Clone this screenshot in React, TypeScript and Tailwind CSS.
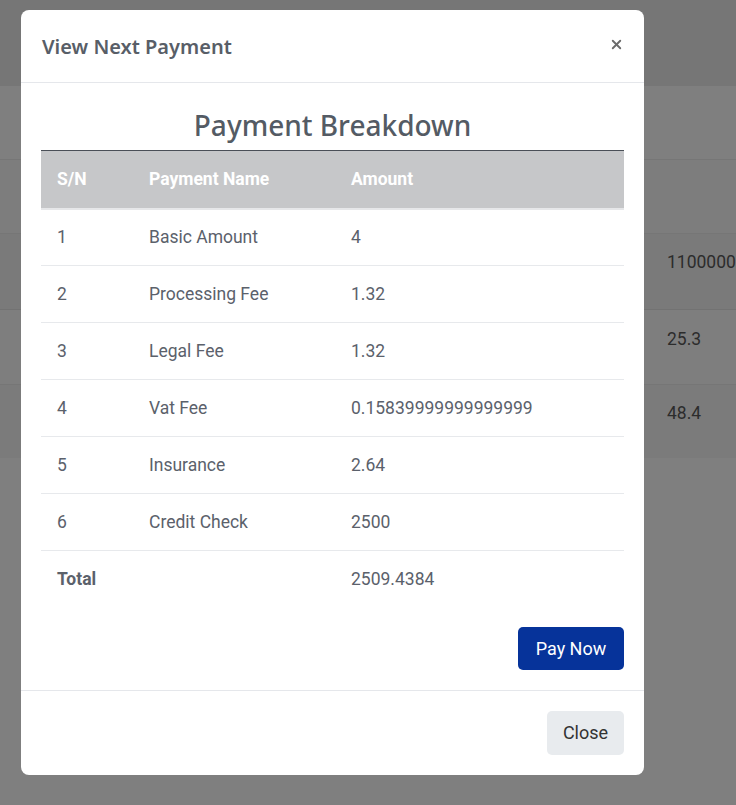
import React from 'react';
import { X } from 'lucide-react';

const rows = [
  { sn: '1', name: 'Basic Amount', amount: '4' },
  { sn: '2', name: 'Processing Fee', amount: '1.32' },
  { sn: '3', name: 'Legal Fee', amount: '1.32' },
  { sn: '4', name: 'Vat Fee', amount: '0.15839999999999999' },
  { sn: '5', name: 'Insurance', amount: '2.64' },
  { sn: '6', name: 'Credit Check', amount: '2500' },
];

function BackgroundPage() {
  // page behind the dimmed overlay
  return (
    <div className="flex flex-col w-full h-full text-[#2c2c2c] text-[17.5px] leading-[20px]">
      <div className="h-[86px] bg-[#767676]"></div>
      <div className="h-[74px] bg-[#7f7f7f] border-b border-[#767676]"></div>
      <div className="h-[74px] bg-[#7d7d7d] border-b border-[#767676]"></div>
      <div className="h-[76px] bg-[#7a7a7a] border-b border-[#727272] pt-[18px] pl-[667px] whitespace-nowrap">1100000</div>
      <div className="h-[75px] bg-[#7e7e7e] border-b border-[#767676] pt-[19px] pl-[667px]">25.3</div>
      <div className="h-[73px] bg-[#7b7b7b] pt-[18px] pl-[667px]">48.4</div>
      <div className="flex-1 bg-[#7f7f7f]"></div>
    </div>
  );
}

export default function App() {
  return (
    <div className="relative w-[736px] h-[805px] overflow-hidden bg-[#7f7f7f]" style={{ fontFamily: 'Roboto, "Liberation Sans", sans-serif' }}>
      <BackgroundPage />

      {/* Modal */}
      <div className="absolute left-[21px] top-[10px] w-[623px] h-[765px] bg-white rounded-[8px] flex flex-col">
        {/* Header */}
        <div className="h-[73px] flex items-center justify-between px-[21px] border-b border-[#e5e7eb] shrink-0">
          <h3 className="text-[20px] font-semibold text-[#585e67] mt-[2px]" style={{ fontFamily: '"Noto Sans", "Open Sans", sans-serif' }}>View Next Payment</h3>
          <button className="text-[#6b6b6b] mr-[-1px] mt-[-4px]">
            <X size={15} strokeWidth={3} />
          </button>
        </div>

        {/* Body */}
        <div className="px-[20px] pt-[22px] pb-[20px] flex flex-col shrink-0">
          <h2 className="text-center text-[28px] font-medium text-[#545b64] leading-[40px] mb-[5px]" style={{ fontFamily: '"Noto Sans", "Open Sans", sans-serif' }}>
            Payment Breakdown
          </h2>
          <table className="w-full border-collapse text-[17.5px] text-[#5b616b]">
            <thead>
              <tr className="bg-[#c6c7c9] text-white border-t border-[#4a4f57] border-b-2 border-b-[#e6e7e9]">
                <th className="h-[58px] w-[92px] pl-[16px] text-left font-bold">S/N</th>
                <th className="h-[58px] w-[202px] pl-[16px] text-left font-bold">Payment Name</th>
                <th className="h-[58px] pl-[16px] text-left font-bold">Amount</th>
              </tr>
            </thead>
            <tbody>
              {rows.map((r) => (
                <tr key={r.sn} className="border-b border-[#e7e9ec]">
                  <td className="h-[57px] pl-[16px]">{r.sn}</td>
                  <td className="h-[57px] pl-[16px]">{r.name}</td>
                  <td className="h-[57px] pl-[16px]">{r.amount}</td>
                </tr>
              ))}
              <tr>
                <td className="h-[56px] pl-[16px] font-bold">Total</td>
                <td className="h-[56px] pl-[16px]"></td>
                <td className="h-[56px] pl-[16px]">2509.4384</td>
              </tr>
            </tbody>
          </table>
          <div className="flex justify-end mt-[20px]">
            <button className="w-[106px] h-[43px] bg-[#06339a] text-white text-[18px] rounded-[5px]">Pay Now</button>
          </div>
        </div>

        {/* Footer */}
        <div className="border-t border-[#e5e7eb] flex justify-end px-[20px] pt-[20px]">
          <button className="w-[77px] h-[44px] bg-[#e8ebee] text-[#333] text-[18px] rounded-[5px]">Close</button>
        </div>
      </div>
    </div>
  );
}
